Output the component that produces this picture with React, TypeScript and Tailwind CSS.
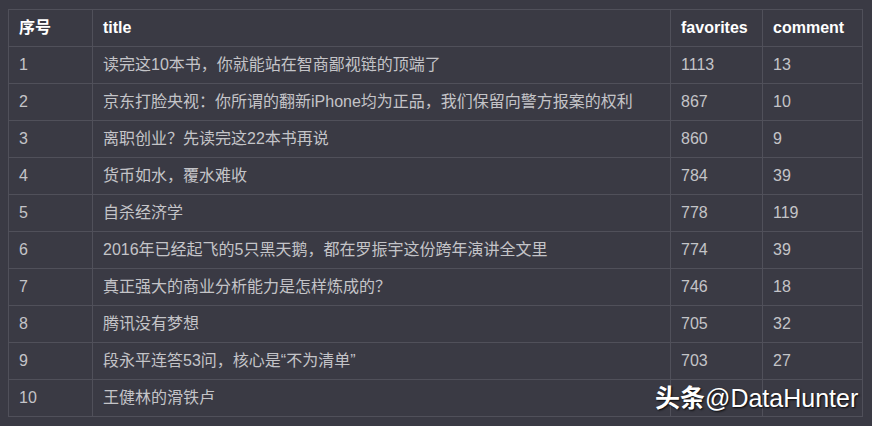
const ROWS: [number, string, number, number][] = [
  [1, '读完这10本书，你就能站在智商鄙视链的顶端了', 1113, 13],
  [2, '京东打脸央视：你所谓的翻新iPhone均为正品，我们保留向警方报案的权利', 867, 10],
  [3, '离职创业？先读完这22本书再说', 860, 9],
  [4, '货币如水，覆水难收', 784, 39],
  [5, '自杀经济学', 778, 119],
  [6, '2016年已经起飞的5只黑天鹅，都在罗振宇这份跨年演讲全文里', 774, 39],
  [7, '真正强大的商业分析能力是怎样炼成的？', 746, 18],
  [8, '腾讯没有梦想', 705, 32],
  [9, '段永平连答53问，核心是“不为清单”', 703, 27],
  [10, '王健林的滑铁卢', 0, 0],
];

const font = { fontFamily: '"Liberation Sans", Arial, "Noto Sans CJK SC", sans-serif' };

export default function App() {
  return (
    <div className="relative w-[872px] h-[426px] bg-[#3a3a44] pt-[9px] pl-[8px] overflow-hidden" style={font}>
      <table className="w-[854px] border-collapse table-fixed text-[16px]">
        <colgroup>
          <col className="w-[84px]" />
          <col className="w-[578px]" />
          <col className="w-[92px]" />
          <col className="w-[100px]" />
        </colgroup>
        <thead>
          <tr className="h-[37px]">
            {['序号', 'title', 'favorites', 'comment'].map((h) => (
              <th key={h} className="border border-[#50505a] px-[10px] text-left font-bold text-white">
                {h}
              </th>
            ))}
          </tr>
        </thead>
        <tbody>
          {ROWS.map(([n, title, fav, com]) => (
            <tr key={n} className="h-[37px] text-[#c4c4c8]">
              <td className="border border-[#50505a] px-[10px]">{n}</td>
              <td className="border border-[#50505a] px-[10px]">{title}</td>
              <td className="border border-[#50505a] px-[10px]">{n === 10 ? '' : fav}</td>
              <td className="border border-[#50505a] px-[10px]">{n === 10 ? '' : com}</td>
            </tr>
          ))}
        </tbody>
      </table>
      <div className="absolute left-[655px] top-[386px] text-[25px] text-white leading-none [text-shadow:1px_1px_2px_rgba(0,0,0,0.9)]">
        <span className="font-bold">头条</span>@DataHunter
      </div>
    </div>
  );
}
